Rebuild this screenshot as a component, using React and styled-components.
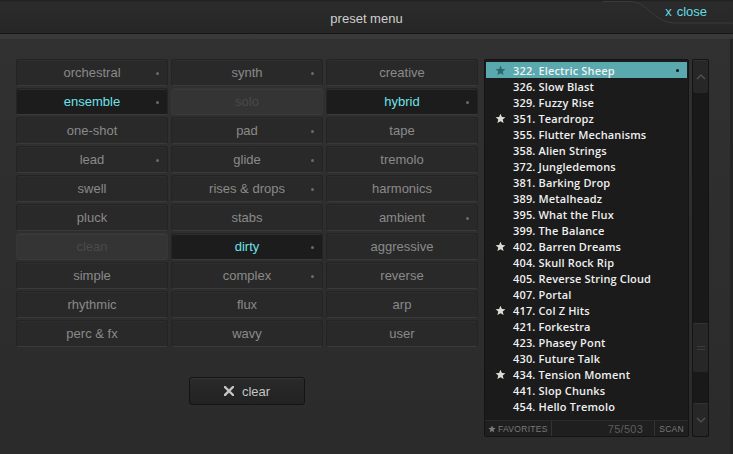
import React from "react";
import styled, { createGlobalStyle } from "styled-components";

const Global = createGlobalStyle`
  html, body { margin: 0; padding: 0; background: #2d2d2d; }
  * { box-sizing: border-box; }
`;

const Frame = styled.div`
  width: 733px;
  height: 454px;
  display: flex;
  flex-direction: column;
  background: linear-gradient(#313131, #2b2b2b);
  font-family: "Liberation Sans", Arial, sans-serif;
  overflow: hidden;
`;

const Header = styled.div`
  position: relative;
  height: 33px;
  flex: none;
  display: flex;
  align-items: center;
  justify-content: center;
  background: linear-gradient(#1e1e1e 0px, #2b2b2b 2px, #262626 33px);
`;

const Title = styled.div`
  color: #cfcfcf;
  font-size: 13px;
  margin-top: 3px;
`;

const TabShape = styled.svg`
  position: absolute;
  right: 0;
  top: 0;
`;

const Close = styled.div`
  position: absolute;
  right: 26px;
  top: 4px;
  color: #62dce4;
  font-size: 13px;
  display: flex;
  gap: 5px;
  align-items: center;
`;

const Separator = styled.div`
  height: 6px;
  flex: none;
  border-top: 1px solid #161616;
  background: #393939;
`;

const Body = styled.div`
  flex: 1;
  display: flex;
  padding: 20px 0 0 16px;
  border-right: 3px solid #232323;
`;

const LeftPane = styled.div`
  width: 462px;
  display: flex;
  flex-direction: column;
  align-items: center;
`;

const Grid = styled.div`
  display: grid;
  grid-template-columns: repeat(3, 152px);
  grid-auto-rows: 27px;
  column-gap: 3px;
  row-gap: 2px;
`;

const Cell = styled.div`
  position: relative;
  display: flex;
  align-items: center;
  justify-content: center;
  border-radius: 3px;
  font-size: 13px;
  background: ${(p) =>
    p.$state === "on" ? "#1c1c1c" : p.$state === "off" ? "#343434" : "#292929"};
  color: ${(p) =>
    p.$state === "on" ? "#6ee2ea" : p.$state === "off" ? "#4a4a4a" : "#8a8a8a"};
  border: 1px solid ${(p) => (p.$state === "off" ? "#363636" : "#242424")};
  border-bottom-color: #3a3a3a;
  box-shadow: inset 0 1px 0 ${(p) => (p.$state === "off" ? "#3a3a3a" : "#2e2e2e")};
`;

const Dot = styled.span`
  position: absolute;
  right: 8px;
  top: 12px;
  width: 3px;
  height: 3px;
  border-radius: 50%;
  background: #6a6a6a;
`;

const ClearButton = styled.div`
  margin-top: 30px;
  width: 116px;
  height: 28px;
  display: flex;
  align-items: center;
  justify-content: center;
  gap: 8px;
  border: 1px solid #141414;
  border-radius: 3px;
  background: linear-gradient(#2a2a2a, #222);
  box-shadow: inset 0 1px 0 #333;
  color: #c4c4c4;
  font-size: 13px;
`;

const ListBox = styled.div`
  margin-left: 6px;
  width: 205px;
  height: 378px;
  display: flex;
  flex-direction: column;
  background: #1b1b1b;
  border: 1px solid #141414;
  border-radius: 2px;
`;

const Rows = styled.div`
  flex: 1;
  padding: 2px 1px 0 1px;
`;

const Row = styled.div`
  position: relative;
  height: 16px;
  display: flex;
  align-items: center;
  background: ${(p) => (p.$sel ? "#5aa9ae" : "transparent")};
  color: #f0f0f0;
  font-family: "Open Sans", "Noto Sans", sans-serif;
  font-weight: 600;
  font-size: 11px;
  letter-spacing: 0.15px;
`;

const StarSlot = styled.span`
  width: 27px;
  flex: none;
  display: flex;
  justify-content: center;
  padding-left: 2px;
`;

const RowDot = styled.span`
  position: absolute;
  right: 8px;
  top: 7px;
  width: 3px;
  height: 3px;
  border-radius: 50%;
  background: #111;
`;

const Footer = styled.div`
  height: 16px;
  flex: none;
  display: flex;
  align-items: center;
  background: #1f1f1f;
  border-top: 1px solid #2a2a2a;
  letter-spacing: 0.3px;
`;

const FootCell = styled.div`
  height: 100%;
  display: flex;
  align-items: center;
  gap: 2px;
  padding: 0 ${(p) => p.$pad || 4}px;
  flex: ${(p) => (p.$grow ? 1 : "none")};
  justify-content: ${(p) => (p.$grow ? "flex-end" : "flex-start")};
  border-right: ${(p) => (p.$sep ? "1px solid #343434" : "none")};
  font-size: ${(p) => (p.$num ? "11px" : "8.5px")};
  color: ${(p) => (p.$num ? "#5e5e5e" : "#7a7a7a")};
`;

const Scroll = styled.div`
  margin-left: 3px;
  width: 17px;
  height: 378px;
  display: flex;
  flex-direction: column;
  background: #191919;
  border: 1px solid #141414;
  border-radius: 2px;
`;

const ScrollBtn = styled.div`
  height: 33px;
  flex: none;
  display: flex;
  align-items: center;
  justify-content: center;
  background: #272727;
  border-radius: 2px;
  box-shadow: inset 0 1px 0 #323232;
`;

const Track = styled.div`
  flex: 1;
  display: flex;
  flex-direction: column;
  justify-content: flex-end;
  padding-bottom: 31px;
`;

const Thumb = styled.div`
  height: 49px;
  display: flex;
  align-items: center;
  justify-content: center;
  background: #272727;
  border-radius: 2px;
  box-shadow: inset 0 1px 0 #333;
`;

const Star = ({ color = "#dcdcd4", size = 11 }) => (
  <svg width={size} height={size} viewBox="0 0 24 24">
    <path
      d="M12 1.5l3.1 7 7.6.7-5.8 5 1.8 7.5L12 17.8l-6.7 3.9 1.8-7.5-5.8-5 7.6-.7z"
      fill={color}
    />
  </svg>
);

const cats = [
  ["orchestral", "", true], ["synth", "", true], ["creative", "", false],
  ["ensemble", "on", true], ["solo", "off", false], ["hybrid", "on", true],
  ["one-shot", "", false], ["pad", "", true], ["tape", "", false],
  ["lead", "", true], ["glide", "", true], ["tremolo", "", false],
  ["swell", "", false], ["rises & drops", "", true], ["harmonics", "", false],
  ["pluck", "", false], ["stabs", "", false], ["ambient", "", true],
  ["clean", "off", false], ["dirty", "on", true], ["aggressive", "", false],
  ["simple", "", false], ["complex", "", true], ["reverse", "", false],
  ["rhythmic", "", false], ["flux", "", false], ["arp", "", false],
  ["perc & fx", "", false], ["wavy", "", false], ["user", "", false],
];

const presets = [
  ["322. Electric Sheep", true],
  ["326. Slow Blast", false],
  ["329. Fuzzy Rise", false],
  ["351. Teardropz", true],
  ["355. Flutter Mechanisms", false],
  ["358. Alien Strings", false],
  ["372. Jungledemons", false],
  ["381. Barking Drop", false],
  ["389. Metalheadz", false],
  ["395. What the Flux", false],
  ["399. The Balance", false],
  ["402. Barren Dreams", true],
  ["404. Skull Rock Rip", false],
  ["405. Reverse String Cloud", false],
  ["407. Portal", false],
  ["417. Col Z Hits", true],
  ["421. Forkestra", false],
  ["423. Phasey Pont", false],
  ["430. Future Talk", false],
  ["434. Tension Moment", true],
  ["441. Slop Chunks", false],
  ["454. Hello Tremolo", false],
];

export default function App() {
  return (
    <Frame>
      <Global />
      <Header>
        <TabShape width="130" height="33" viewBox="0 0 130 33">
          <path d="M0 1.5 L28 1.5 C45 1.5 50 23 72 23 L130 23" fill="none" stroke="#3a3a3a" strokeWidth="1" />
        </TabShape>
        <Title>preset menu</Title>
        <Close>
          <span>x</span>
          <span>close</span>
        </Close>
      </Header>
      <Separator />
      <Body>
        <LeftPane>
          <Grid>
            {cats.map(([label, state, dot]) => (
              <Cell key={label} $state={state}>
                {label}
                {dot && <Dot />}
              </Cell>
            ))}
          </Grid>
          <ClearButton>
            <svg width="10" height="10" viewBox="0 0 10 10">
              <path d="M1 1L9 9M9 1L1 9" stroke="#c4c4c4" strokeWidth="2.4" strokeLinecap="square" />
            </svg>
            <span>clear</span>
          </ClearButton>
        </LeftPane>
        <ListBox>
          <Rows>
            {presets.map(([name, fav], i) => (
              <Row key={name} $sel={i === 0}>
                <StarSlot>{fav && <Star color={i === 0 ? "#2d676b" : "#dcdcd4"} />}</StarSlot>
                {name}
                {i === 0 && <RowDot />}
              </Row>
            ))}
          </Rows>
          <Footer>
            <FootCell $sep $pad={3}>
              <Star color="#7a7a7a" size={8} />
              FAVORITES
            </FootCell>
            <FootCell $grow $sep $num $pad={11}>75/503</FootCell>
            <FootCell $pad={4}>SCAN</FootCell>
          </Footer>
        </ListBox>
        <Scroll>
          <ScrollBtn>
            <svg width="10" height="6" viewBox="0 0 10 6">
              <path d="M1 5L5 1L9 5" fill="none" stroke="#555" strokeWidth="1.2" />
            </svg>
          </ScrollBtn>
          <Track>
            <Thumb>
              <svg width="8" height="4" viewBox="0 0 8 4">
                <path d="M0 0.5H8M0 3.5H8" stroke="#3c3c3c" strokeWidth="1" />
              </svg>
            </Thumb>
          </Track>
          <ScrollBtn>
            <svg width="10" height="6" viewBox="0 0 10 6">
              <path d="M1 1L5 5L9 1" fill="none" stroke="#555" strokeWidth="1.2" />
            </svg>
          </ScrollBtn>
        </Scroll>
      </Body>
    </Frame>
  );
}
